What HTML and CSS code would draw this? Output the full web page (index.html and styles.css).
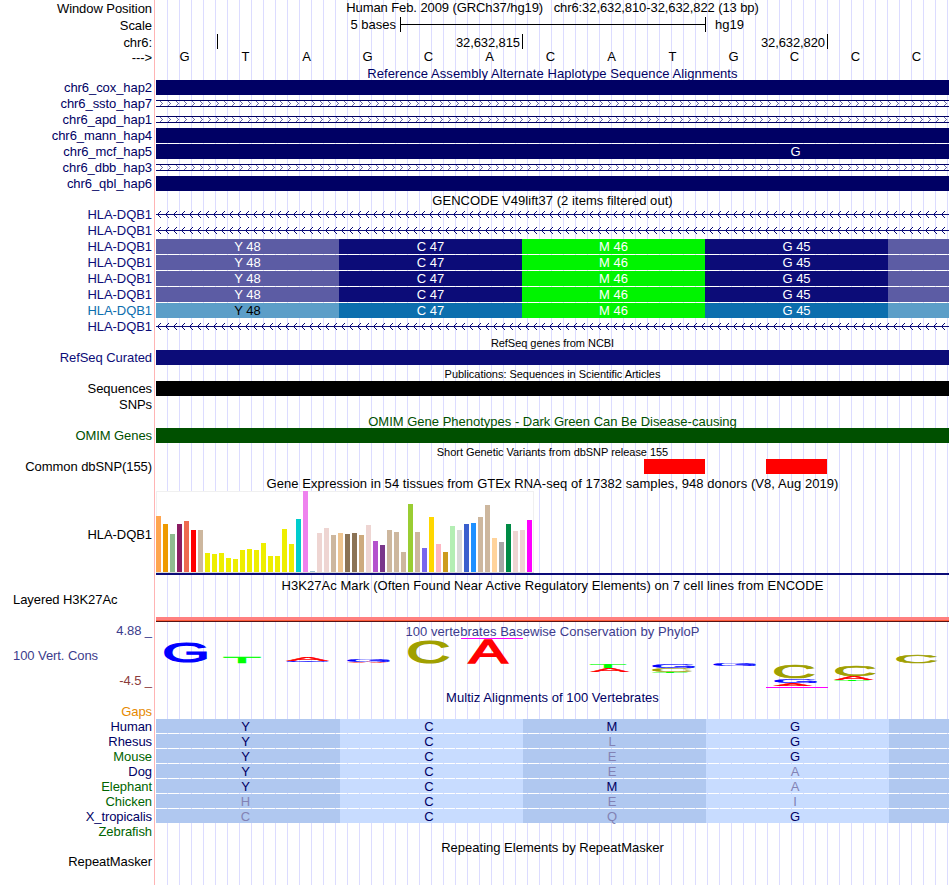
FILE: index.html
```html
<!DOCTYPE html>
<html>
<head>
  <meta charset="utf-8">
  <title>Human chr6:32,632,810-32,632,822 hg19</title>
  <link rel="stylesheet" href="styles.css">
</head>
<body>
  <svg class="defs" width="0" height="0">
    <pattern id="fwd" width="8" height="7" patternUnits="userSpaceOnUse">
      <path d="M4 1h1v1h-1zM5 2h1v1h-1zM6 3h1v1h-1zM5 4h1v1h-1zM4 5h1v1h-1z" fill="#6868a8" />
    </pattern>
    <pattern id="rev" width="8" height="15" patternUnits="userSpaceOnUse">
      <path d="M0 7h8v1h-8zM1 7h1v1h-1zM2 6h1v1h-1zM3 5h1v1h-1zM4 4h1v1h-1zM2 8h1v1h-1zM3 9h1v1h-1zM4 10h1v1h-1z" fill="#0c0c78" />
    </pattern>
  </svg>

  <div class="browser">

    <!-- ruler -->
    <div class="row head"><div class="label">Window Position</div><div class="track center position">Human Feb. 2009 (GRCh37/hg19) &nbsp; chr6:32,632,810-32,632,822 (13 bp)</div></div>
    <div class="row head"><div class="label">Scale</div><div class="track scale"><div class="scale-text">5 bases</div><div class="scale-bar"></div><div class="scale-db">hg19</div></div></div>
    <div class="row head ticks"><div class="label">chr6:</div><div class="track positions"><span class="tick first"></span><span class="tick">32,632,815</span><span class="tick">32,632,820</span></div></div>
    <div class="row head bases"><div class="label">---&gt;</div><div class="track letters"><span>G</span><span>T</span><span>A</span><span>G</span><span>C</span><span>A</span><span>C</span><span>A</span><span>T</span><span>G</span><span>C</span><span>C</span><span>C</span></div></div>

    <!-- haplotypes -->
    <div class="title hap">Reference Assembly Alternate Haplotype Sequence Alignments</div>
    <div class="row hap"><div class="label">chr6_cox_hap2</div><div class="track"><div class="bar"></div></div></div>
    <div class="row hap"><div class="label">chr6_ssto_hap7</div><div class="track"><svg class="open" width="793" height="7"><rect width="793" height="7" fill="url(#fwd)" /></svg></div></div>
    <div class="row hap"><div class="label">chr6_apd_hap1</div><div class="track"><svg class="open" width="793" height="7"><rect width="793" height="7" fill="url(#fwd)" /></svg></div></div>
    <div class="row hap"><div class="label">chr6_mann_hap4</div><div class="track"><div class="bar"></div></div></div>
    <div class="row hap"><div class="label">chr6_mcf_hap5</div><div class="track"><div class="bar letters"><span class="snp">G</span></div></div></div>
    <div class="row hap"><div class="label">chr6_dbb_hap3</div><div class="track"><svg class="open" width="793" height="7"><rect width="793" height="7" fill="url(#fwd)" /></svg></div></div>
    <div class="row hap"><div class="label">chr6_qbl_hap6</div><div class="track"><div class="bar"></div></div></div>

    <!-- genes -->
    <div class="title">GENCODE V49lift37 (2 items filtered out)</div>
    <div class="row gene"><div class="label">HLA-DQB1</div><div class="track"><svg width="793" height="15"><rect width="793" height="15" fill="url(#rev)" /></svg></div></div>
    <div class="row gene"><div class="label">HLA-DQB1</div><div class="track"><svg width="793" height="15"><rect width="793" height="15" fill="url(#rev)" /></svg></div></div>
    <div class="row gene"><div class="label">HLA-DQB1</div><div class="track codons"><span>Y 48</span><span>C 47</span><span class="met">M 46</span><span>G 45</span><span></span></div></div>
    <div class="row gene"><div class="label">HLA-DQB1</div><div class="track codons"><span>Y 48</span><span>C 47</span><span class="met">M 46</span><span>G 45</span><span></span></div></div>
    <div class="row gene"><div class="label">HLA-DQB1</div><div class="track codons"><span>Y 48</span><span>C 47</span><span class="met">M 46</span><span>G 45</span><span></span></div></div>
    <div class="row gene"><div class="label">HLA-DQB1</div><div class="track codons"><span>Y 48</span><span>C 47</span><span class="met">M 46</span><span>G 45</span><span></span></div></div>
    <div class="row gene alt"><div class="label">HLA-DQB1</div><div class="track codons"><span>Y 48</span><span>C 47</span><span class="met">M 46</span><span>G 45</span><span></span></div></div>
    <div class="row gene"><div class="label">HLA-DQB1</div><div class="track"><svg width="793" height="15"><rect width="793" height="15" fill="url(#rev)" /></svg></div></div>

    <div class="title small">RefSeq genes from NCBI</div>
    <div class="row gene"><div class="label">RefSeq Curated</div><div class="track"><div class="bar"></div></div></div>

    <div class="title small">Publications: Sequences in Scientific Articles</div>
    <div class="row"><div class="label">Sequences</div><div class="track"><div class="bar"></div></div></div>
    <div class="row"><div class="label">SNPs</div><div class="track"></div></div>

    <div class="title omim">OMIM Gene Phenotypes - Dark Green Can Be Disease-causing</div>
    <div class="row omim"><div class="label">OMIM Genes</div><div class="track"><div class="bar"></div></div></div>

    <div class="title small">Short Genetic Variants from dbSNP release 155</div>
    <div class="row"><div class="label">Common dbSNP(155)</div><div class="track variants"><div class="variant"></div><div class="variant"></div></div></div>

    <!-- expression -->
    <div class="title">Gene Expression in 54 tissues from GTEx RNA-seq of 17382 samples, 948 donors (V8, Aug 2019)</div>
    <div class="row gtex"><div class="label">HLA-DQB1</div><div class="track"><div class="chart" id="chart"></div><div class="model"></div></div></div>

    <div class="title">H3K27Ac Mark (Often Found Near Active Regulatory Elements) on 7 cell lines from ENCODE</div>
    <div class="row layered"><div class="label left">Layered H3K27Ac</div><div class="track"><div class="band"></div></div></div>

    <!-- conservation -->
    <div class="row phylo-top"><div class="label">4.88 _</div><div class="track center">100 vertebrates Basewise Conservation by PhyloP</div></div>
    <div class="row phylo"><div class="label"><div class="left">100 Vert. Cons</div><div class="min">-4.5 _</div></div><div class="track"><svg id="logo" width="793" height="51" viewBox="156 638 793 51"></svg></div></div>

    <div class="title multiz">Multiz Alignments of 100 Vertebrates</div>
    <div class="row species gaps"><div class="label">Gaps</div><div class="track"></div></div>
    <div class="row species"><div class="label">Human</div><div class="track aligned"><span>Y</span><span>C</span><span>M</span><span>G</span><span></span></div></div>
    <div class="row species"><div class="label">Rhesus</div><div class="track aligned"><span>Y</span><span>C</span><span class="diff">L</span><span>G</span><span></span></div></div>
    <div class="row species green"><div class="label">Mouse</div><div class="track aligned"><span>Y</span><span>C</span><span class="diff">E</span><span>G</span><span></span></div></div>
    <div class="row species"><div class="label">Dog</div><div class="track aligned"><span>Y</span><span>C</span><span class="diff">E</span><span class="diff">A</span><span></span></div></div>
    <div class="row species green"><div class="label">Elephant</div><div class="track aligned"><span>Y</span><span>C</span><span>M</span><span class="diff">A</span><span></span></div></div>
    <div class="row species green"><div class="label">Chicken</div><div class="track aligned"><span class="diff">H</span><span>C</span><span class="diff">E</span><span class="diff">I</span><span></span></div></div>
    <div class="row species"><div class="label">X_tropicalis</div><div class="track aligned"><span class="diff">C</span><span>C</span><span class="diff">Q</span><span>G</span><span></span></div></div>
    <div class="row species green"><div class="label">Zebrafish</div><div class="track"></div></div>

    <div class="title repeats">Repeating Elements by RepeatMasker</div>
    <div class="row"><div class="label">RepeatMasker</div><div class="track"></div></div>

    <!-- end of browser -->
  </div>

  <script>
    // height and colour of each tissue
    const tissues = [
      [56,'#ffa54f'],[48,'#ee9a00'],[38,'#8fbc8f'],[48,'#8b1c62'],[51,'#ee6a50'],[42,'#ff0000'],[42,'#cdb79e'],
      [19,'#eeee00'],[18,'#eeee00'],[19,'#eeee00'],[14,'#eeee00'],[13,'#eeee00'],[22,'#eeee00'],[23,'#eeee00'],
      [22,'#eeee00'],[29,'#eeee00'],[16,'#eeee00'],[16,'#eeee00'],[43,'#eeee00'],[28,'#eeee00'],[53,'#00cdcd'],
      [81,'#ee82ee'],[1,'#9ac0cd'],[39,'#eed5d2'],[44,'#eed5d2'],[37,'#cdb79e'],[39,'#eec591'],[38,'#8b7355'],
      [39,'#8b7355'],[37,'#cdaa7d'],[47,'#eed5d2'],[31,'#b452cd'],[27,'#7a378b'],[42,'#cdb79e'],[40,'#cdb79e'],
      [20,'#cdb79e'],[68,'#9acd32'],[40,'#cdb79e'],[24,'#7a67ee'],[55,'#ffd700'],[28,'#ffb6c1'],[20,'#cd9b1d'],
      [46,'#b4eeb4'],[42,'#d9d9d9'],[48,'#3a5fcd'],[49,'#1e90ff'],[55,'#cdb79e'],[67,'#cdb79e'],[34,'#ffd39b'],
      [30,'#a6a6a6'],[48,'#008b45'],[41,'#eed5d2'],[42,'#eed5d2'],[52,'#ff00ff']
    ];
    const chart = document.getElementById('chart');
    for (const [height, color] of tissues) {
      const bar = document.createElement('div');
      bar.style.height = height + 'px';
      bar.style.background = color;
      chart.appendChild(bar);
    }

    // base, left, right, top, bottom
    const letters = [
      ['G',164,207,642,663],['T',223,261,657,663],['A',286,329,657,661.5],['G',286,329,661.3,662.5],
      ['G',347,390,659,662],['A',347,388,661.5,662.7],['C',408,449,641,664],['A',467.5,508.5,640,664],
      ['T',589.5,626.5,664,668],['A',590,629.5,668,672],['G',652,695,664,668],['C',652,692.5,668,672],
      ['T',652,688,672,673],['G',713,756,664,666],['C',774,814.5,665,679],['G',774,817,679,683],
      ['A',773,812.5,683,686],['C',835,875.5,665,676],['A',834,873.5,676,680],['T',834,870,680,681],
      ['C',896,937,655,663]
    ];
    const colors = { A: '#ff0000', C: '#a0a000', G: '#0000ff', T: '#00ff00' };
    // ink box of each capital at font-size 100, stroke included: left, right, top, bottom
    const ink = { A: [-2, 68.5, -71, 2], C: [3, 70.5, -72, 3], G: [3, 73, -72, 3], T: [0, 61, -71, 2] };
    const svgNS = 'http://www.w3.org/2000/svg';
    const logo = document.getElementById('logo');
    for (const [base, left, right, top, bottom] of letters) {
      const [il, ir, it, ib] = ink[base];
      const sx = (right - left) / (ir - il);
      const sy = (bottom - top) / (ib - it);
      const text = document.createElementNS(svgNS, 'text');
      text.textContent = base;
      text.setAttribute('fill', colors[base]);
      text.setAttribute('stroke', colors[base]);
      text.setAttribute('transform', `matrix(${sx} 0 0 ${sy} ${left - il * sx} ${top - it * sy})`);
      logo.appendChild(text);
    }
    // clipped values
    for (const [x, y] of [[461, 638], [766, 687]]) {
      const line = document.createElementNS(svgNS, 'rect');
      line.setAttribute('x', x);
      line.setAttribute('y', y);
      line.setAttribute('width', 62);
      line.setAttribute('height', 1);
      line.setAttribute('fill', '#ff00ff');
      logo.appendChild(line);
    }
  </script>
</body>
</html>
```
FILE: styles.css
```css
html{ background-color: #fff; }
body{ margin: 0; font-family: "Liberation Sans", Arial, sans-serif; font-size: 13px; line-height: 15px; color: #000; }
svg{ display: block; shape-rendering: crispEdges; }
.defs{ position: absolute; }

.browser{ width: 949px; height: 885px; overflow: hidden; background:
  linear-gradient(#fff, #fff) 0 0 / 154px 100% no-repeat,
  linear-gradient(#ffb4b4, #ffb4b4) 154px 0 / 1px 100% no-repeat,
  linear-gradient(#fff, #fff) 155px 0 / 10px 100% no-repeat,
  linear-gradient(to right, #dcdcff 1px, transparent 1px) 167px 0 / 12px 100% repeat-x; }

.row{ display: grid; grid-template-columns: 152px 793px; column-gap: 4px; height: 16px; }
.label{ text-align: right; white-space: nowrap; letter-spacing: -0.07px; }
.left{ text-align: left; padding-left: 13px; }
.center{ text-align: center; }
.title{ height: 15px; line-height: 17px; margin-left: 156px; text-align: center; white-space: nowrap; letter-spacing: 0.05px; }
.title.hap{ letter-spacing: 0.08px; }
.title.omim, .title.repeats{ letter-spacing: 0; }
.title.small{ font-size: 11px; line-height: 16px; letter-spacing: -0.04px; }
.bar{ height: 15px; background-color: #000; }

.head{ height: 17px; }
.head .label{ padding-top: 1px; }
.position{ letter-spacing: -0.09px; }
.scale{ display: flex; }
.scale-text{ width: 240px; text-align: right; }
.scale-bar{ width: 304px; height: 15px; margin: 0 9px 0 4px; border: solid #000; border-width: 0 1px; background: linear-gradient(#000, #000) 0 7px / 100% 1px no-repeat; }
.ticks{ height: 15px; }
.positions{ display: flex; letter-spacing: -0.1px; }
.tick{ box-sizing: border-box; width: 305px; height: 15px; padding: 1px 2px 0 0; border-right: 1px solid #000; text-align: right; }
.tick.first{ width: 62px; }
.bases{ height: 16px; }
.letters{ display: flex; }
.letters span{ width: 61px; padding-right: 4px; box-sizing: border-box; text-align: center; }

.hap{ color: #000064; }
.hap .bar{ background-color: #000064; }
.open{ margin-top: 4px; background: linear-gradient(#000064, #000064) 0 0 / 100% 1px no-repeat, linear-gradient(#000064, #000064) 0 6px / 100% 1px no-repeat; }
.letters .snp{ margin-left: 609px; padding: 0; color: #fff; }

.gene .label{ color: #0c0c78; }
.gene .bar{ background-color: #0c0c78; }
.codons{ display: grid; grid-template-columns: repeat(4, 183px) 61px; height: 15px; color: #fff; text-align: center; }
.codons span{ background-color: #0c0c78; }
.codons span:first-child, .codons span:last-child{ background-color: #5c5ca4; }
.codons .met{ background-color: #00f400; }
.alt .label{ color: #0c6eae; }
.alt .codons span{ background-color: #0c6eae; }
.alt .codons span:first-child, .alt .codons span:last-child{ background-color: #5c9ec8; color: #000; }
.alt .codons .met{ background-color: #00f400; }

.omim{ color: #005000; }
.omim .bar{ background-color: #005000; }
.variants{ display: flex; gap: 61px; padding-left: 488px; }
.variant{ width: 61px; height: 15px; background-color: #f00; }

.gtex{ height: 87px; }
.gtex .label{ padding-top: 37px; }
.chart{ display: flex; align-items: flex-end; gap: 2px; box-sizing: border-box; width: 378px; height: 82px; margin-top: 1px; background-color: #fff; border-bottom: 1px solid #d9d9d9; box-shadow: inset 1px 1px #f0f0f0, inset -1px 0 #f0f0f0; }
.chart div{ width: 5px; }
.model{ height: 2px; background-color: #0c0c78; }

.layered{ height: 31px; }
.band{ height: 3px; margin-top: 25px; background-color: #ff8080; border-bottom: 1px solid #5a1414; box-shadow: inset 0 -1px #ff5c3c; padding-bottom: 1px; }

.phylo-top{ height: 15px; color: #3c3c8c; }
.phylo-top .track{ line-height: 17px; letter-spacing: 0.04px; }
.phylo{ height: 51px; }
.phylo .left{ padding-top: 10px; color: #3c3c8c; }
.min{ padding-top: 10px; color: #8c3c3c; }
#logo{ overflow: visible; font-size: 100px; stroke-width: 4px; }
#logo rect{ stroke: none; }

.multiz, .species .label{ color: #000064; }
.species{ height: 15px; }
.species.gaps .label{ color: #e68a00; }
.species.green .label{ color: #006400; }
.aligned{ display: grid; grid-template-columns: 184px repeat(3, 183px) 60px; grid-template-rows: 14px; height: 14px; text-align: center; color: #000064; }
.aligned span{ background-color: #b0c8f0; padding-right: 5px; }
.aligned span:nth-child(even){ background-color: #c8dcff; }
.aligned .diff{ color: #8282b4; }
```
